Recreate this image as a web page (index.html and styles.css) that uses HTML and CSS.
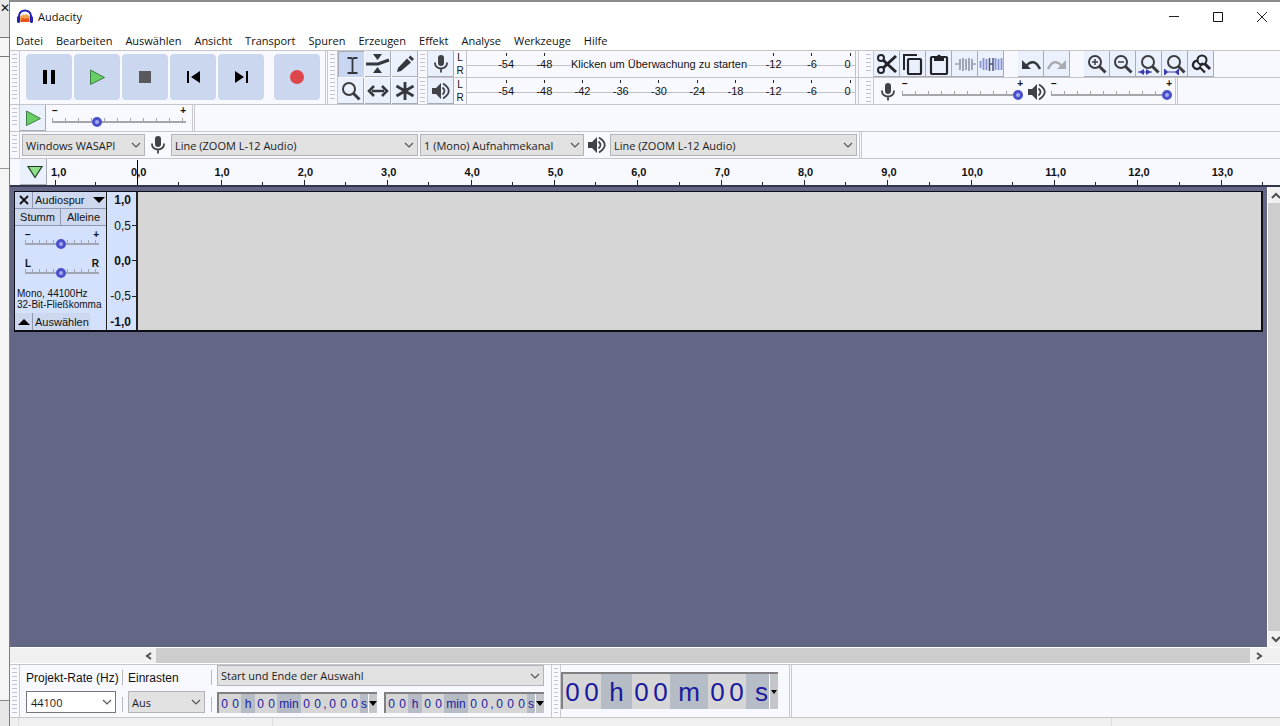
FILE: index.html
```html
<!DOCTYPE html>
<html lang="de">
<head>
<meta charset="UTF-8">
<meta name="viewport" content="width=device-width, initial-scale=1.0">
<title>Audacity</title>
<link rel="stylesheet" href="styles.css">
</head>
<body>

<!-- shared icons -->
<svg class="sprites" width="0" height="0">
    <symbol id="mic" viewBox="0 0 18 20">
        <rect x="6" y="1" width="6" height="11" rx="3" fill="#3f4246"/>
        <path d="M3 8.500v1a6 5 0 0 0 12 0v-1M9 14.500v4" fill="none" stroke="#3f4246" stroke-width="1.800"/>
    </symbol>
    <symbol id="speaker" viewBox="0 0 18 18">
        <path d="M0 6h4l5-5v16l-5-5H0z" fill="#3f4246"/>
        <path d="M10.500 5.500q4 3.500 0 7M11 1.500q11.500 7.500 0 15" fill="none" stroke="#3f4246" stroke-width="1.800"/>
    </symbol>
    <symbol id="chevron" viewBox="0 0 10 6">
        <path d="M1 1l4 4 4-4" fill="none" stroke="#555" stroke-width="1.200"/>
    </symbol>
    <symbol id="lens" viewBox="0 0 22 22">
        <circle cx="9" cy="9" r="6" fill="none" stroke="#3c3c40" stroke-width="2"/>
        <path d="M13.500 13.500l6 6" stroke="#3c3c40" stroke-width="3"/>
    </symbol>
</svg>

<div class="desktop">
    <div class="behind">
        <div class="behind-top">✕</div>
        <div class="behind-bar"></div>
        <div class="behind-gap"></div>
        <div class="behind-page"></div>
        <div class="behind-foot"></div>
    </div>

    <div class="window">
        <header class="titlebar">
            <svg width="16" height="16" viewBox="0 0 16 16">
                <path d="M3 13l-1-3 2-4 1 1 1-2 2 1 2-1 1 2 1-1 2 4-1 3z" fill="#f5a04a"/>
                <path d="M4 10l2-1 2 1 2-1 2 1v3H4z" fill="#e8501c"/>
                <path d="M2 9V7a6 5.500 0 0 1 12 0v2" fill="none" stroke="#2222b4" stroke-width="2"/>
                <rect x="0" y="7" width="3" height="7" rx="1.500" fill="#2222b4"/>
                <rect x="13" y="7" width="3" height="7" rx="1.500" fill="#2222b4"/>
            </svg>
            <span class="title">Audacity</span>
            <button class="win-btn" aria-label="Minimieren"><svg width="12" height="12"><path d="M1 5.500h10" stroke="#222"/></svg></button>
            <button class="win-btn" aria-label="Maximieren"><svg width="12" height="12"><path d="M1.500 1.500h9v9h-9z" fill="none" stroke="#111"/></svg></button>
            <button class="win-btn" aria-label="Schließen"><svg width="12" height="12"><path d="M1 1l10 10M11 1L1 11" stroke="#222"/></svg></button>
        </header>

        <nav class="menu">
            <button>Datei</button>
            <button>Bearbeiten</button>
            <button>Auswählen</button>
            <button>Ansicht</button>
            <button>Transport</button>
            <button>Spuren</button>
            <button>Erzeugen</button>
            <button>Effekt</button>
            <button>Analyse</button>
            <button>Werkzeuge</button>
            <button>Hilfe</button>
        </nav>

        <div class="dock">
            <div class="grip"></div>
            <div class="transport">
                <button aria-label="Pause"><svg width="20" height="20"><path d="M4 3h4v14H4zM12 3h4v14h-4z"/></svg></button>
                <button aria-label="Wiedergabe"><svg width="20" height="20"><path d="M3.500 3l14 7.500-14 7z" fill="#67cf63" stroke="#3f7f45"/></svg></button>
                <button aria-label="Stopp"><svg width="20" height="20"><path d="M4 4h12v12H4z" fill="#58595b"/></svg></button>
                <button aria-label="Zum Anfang"><svg width="20" height="20"><path d="M4 4h2v12H4zM17 4v12l-9-6z"/></svg></button>
                <button aria-label="Zum Ende"><svg width="20" height="20"><path d="M4 4v12l9-6zM15 4h2v12h-2z"/></svg></button>
                <button class="record" aria-label="Aufnahme"><svg width="20" height="20"><circle cx="10" cy="10" r="7" fill="#dd464b"/></svg></button>
            </div>
            <div class="divider"></div>

            <div class="grip"></div>
            <div class="tools">
                <button class="tool active" aria-label="Auswahl"><svg width="22" height="22"><path d="M6.500 4h3.500l1.500 1 1.500-1h3.500M6.500 19h3.500l1.500-1 1.500 1h3.500M11.500 5v13" fill="none" stroke="#34373c" stroke-width="1.800"/></svg></button>
                <button class="tool" aria-label="Hüllkurve"><svg width="24" height="22"><path d="M7 1h9l-4.500 6zM7 20h9l-4.500-6z" fill="#34373c"/><path d="M0 11h12l11-4" fill="none" stroke="#34373c" stroke-width="3"/></svg></button>
                <button class="tool" aria-label="Zeichnen"><svg width="22" height="22"><path d="M3 19l1-4L13 5.500l4 4L7 18zM14.500 4.500l2-2 3.500 3.500-2 2z" fill="#34373c"/></svg></button>
                <button class="tool" aria-label="Zoom"><svg width="22" height="22"><use href="#lens"/></svg></button>
                <button class="tool" aria-label="Verschieben"><svg width="22" height="22"><path d="M5 11h12M7 6l-5 5 5 5M15 6l5 5-5 5" fill="none" stroke="#34373c" stroke-width="2.500"/></svg></button>
                <button class="tool" aria-label="Multi"><svg width="22" height="22"><path d="M11 2v18M2.500 6l17 10M2.500 16l17-10" stroke="#34373c" stroke-width="2.800"/></svg></button>
            </div>

            <div class="meters">
                <div class="meter-row">
                    <div class="grip"></div>
                    <button class="tool" aria-label="Aufnahmepegel"><svg width="20" height="20"><use href="#mic"/></svg></button>
                    <div class="lr"><span>L</span><span>R</span></div>
                    <div class="meter">
                        <span>-54</span><span>-48</span><button class="monitor">Klicken um Überwachung zu starten</button><span>-12</span><span>-6</span><span class="zero">0</span>
                    </div>
                </div>
                <div class="meter-row">
                    <div class="grip"></div>
                    <button class="tool" aria-label="Wiedergabepegel"><svg width="18" height="18"><use href="#speaker"/></svg></button>
                    <div class="lr"><span>L</span><span>R</span></div>
                    <div class="meter">
                        <span>-54</span><span>-48</span><span>-42</span><span>-36</span><span>-30</span><span>-24</span><span>-18</span><span>-12</span><span>-6</span><span class="zero">0</span>
                    </div>
                </div>
            </div>

            <div class="edit-col">
                <div class="edit-row">
                    <div class="grip"></div>
                    <button class="tool" aria-label="Ausschneiden"><svg width="22" height="22"><circle cx="5" cy="5" r="3" fill="none" stroke="#222428" stroke-width="2"/><circle cx="5" cy="17" r="3" fill="none" stroke="#222428" stroke-width="2"/><path d="M7 7l13 12M7 15L20 3" stroke="#222428" stroke-width="3"/></svg></button>
                    <button class="tool" aria-label="Kopieren"><svg width="22" height="22"><path d="M2 17V2h13" fill="none" stroke="#222428" stroke-width="2"/><rect x="6" y="6" width="13" height="15" rx="1" fill="none" stroke="#222428" stroke-width="2.200"/></svg></button>
                    <button class="tool" aria-label="Einfügen"><svg width="22" height="22"><rect x="3" y="4" width="16" height="17" rx="1" fill="none" stroke="#222428" stroke-width="2.200"/><path d="M6 4h3a2 2.500 0 0 1 4 0h3v4H6z" fill="#222428"/></svg></button>
                    <button class="tool" aria-label="Trimmen"><svg width="22" height="22"><path d="M1 11h4M18 11h4" stroke="#a0a3b0" stroke-width="1.500"/><path d="M6 6v11M9 5v13M12 6v11M15 5v13M18 6v11" stroke="#9a9dae" stroke-width="1.800"/></svg></button>
                    <button class="tool" aria-label="Stille"><svg width="24" height="22"><path d="M1.500 8v7M4.500 5v12M7.500 6v11M16.500 5v12M19.500 6v11M22.500 5v12" stroke="#8790d0" stroke-width="1.800"/><path d="M10.500 5v13M14 5v13M10 11h4" stroke="#4d5380" stroke-width="1.500"/></svg></button>
                    <span class="space"></span>
                    <button class="tool" aria-label="Rückgängig"><svg width="22" height="22"><path d="M2 7v9h9z" fill="#34373c"/><path d="M6 13q8-9 14 3" fill="none" stroke="#34373c" stroke-width="2.500"/></svg></button>
                    <button class="tool" aria-label="Wiederholen"><svg width="22" height="22"><path d="M20 7v9h-9z" fill="#a9abb0"/><path d="M16 13q-8-9-14 3" fill="none" stroke="#a9abb0" stroke-width="2.500"/></svg></button>
                    <span class="space"></span>
                    <button class="tool" aria-label="Vergrößern"><svg width="22" height="22"><use href="#lens"/><path d="M6 9h6M9 6v6" stroke="#3c3c40" stroke-width="1.500"/></svg></button>
                    <button class="tool" aria-label="Verkleinern"><svg width="22" height="22"><use href="#lens"/><path d="M6 9h6" stroke="#3c3c40" stroke-width="1.500"/></svg></button>
                    <button class="tool" aria-label="Auswahl einpassen"><svg width="22" height="22"><use href="#lens" x="1" y="0"/><path d="M0 19h14" stroke="#3a3cae"/><path d="M1 19l5-3v6zM13 19l-5-3v6z" fill="#3a3cae"/></svg></button>
                    <button class="tool" aria-label="Projekt einpassen"><svg width="22" height="22"><use href="#lens" x="1" y="0"/><path d="M0 19h15M.5 16v6M14.500 16v6" stroke="#3a3cae"/><path d="M4 19l-3-3v6zM11 19l3-3v6z" fill="#3a3cae"/></svg></button>
                    <button class="tool" aria-label="Zoom umschalten"><svg width="22" height="22" fill="none" stroke="#222428"><circle cx="12" cy="7" r="4.500" stroke-width="2"/><path d="M15 11l5 5" stroke-width="3"/><path d="M8 8a4 4 0 1 0 2 6.500l5 5M10 13l3-3" stroke-width="2.200"/></svg></button>
                </div>
                <div class="edit-row">
                    <div class="grip"></div>
                    <svg class="mixer-icon" width="20" height="20"><use href="#mic"/></svg>
                    <label class="slider mixer">
                        <span class="signs"><span>−</span><span>+</span></span>
                        <input type="range" min="0" max="100" value="100" aria-label="Aufnahmelautstärke">
                    </label>
                    <svg class="mixer-icon" width="20" height="18"><use href="#speaker"/></svg>
                    <label class="slider mixer">
                        <span class="signs"><span>−</span><span>+</span></span>
                        <input type="range" min="0" max="100" value="100" aria-label="Wiedergabelautstärke">
                    </label>
                    <div class="divider"></div>
                </div>
            </div>
        </div>

        <div class="bar">
            <div class="grip"></div>
            <button class="tool" aria-label="Wiedergabe mit Geschwindigkeit"><svg width="20" height="20"><path d="M3.500 3l14 7.500-14 7z" fill="#67cf63" stroke="#3f7f45"/></svg></button>
            <label class="slider speed">
                <span class="signs"><span>−</span><span>+</span></span>
                <input type="range" min="0" max="100" value="32" aria-label="Wiedergabegeschwindigkeit">
            </label>
            <div class="divider"></div>
        </div>

        <div class="bar devices">
            <div class="grip"></div>
            <div class="combo host"><select aria-label="Audio-Host"><option>Windows WASAPI</option></select><svg width="10" height="6"><use href="#chevron"/></svg></div>
            <svg class="device-icon" width="20" height="20"><use href="#mic"/></svg>
            <div class="combo device"><select aria-label="Aufnahmegerät"><option>Line (ZOOM L-12 Audio)</option></select><svg width="10" height="6"><use href="#chevron"/></svg></div>
            <div class="combo channel"><select aria-label="Aufnahmekanäle"><option>1 (Mono) Aufnahmekanal</option></select><svg width="10" height="6"><use href="#chevron"/></svg></div>
            <svg class="device-icon" width="20" height="18"><use href="#speaker"/></svg>
            <div class="combo device"><select aria-label="Wiedergabegerät"><option>Line (ZOOM L-12 Audio)</option></select><svg width="10" height="6"><use href="#chevron"/></svg></div>
            <div class="divider"></div>
        </div>

        <div class="timeline">
            <button class="tool pin" aria-label="Abspielposition"><svg width="18" height="16"><path d="M2 2.500h14l-7 11z" fill="#8fe08a" stroke="#1f3a22" stroke-width="1.200"/></svg></button>
            <span class="lead">1,0</span>
            <div class="seconds">
                <span class="cursor">0,0</span><span>1,0</span><span>2,0</span><span>3,0</span><span>4,0</span><span>5,0</span><span>6,0</span><span>7,0</span><span>8,0</span><span>9,0</span><span>10,0</span><span>11,0</span><span>12,0</span><span>13,0</span>
            </div>
        </div>

        <main class="project">
            <div class="tracks">
                <section class="track">
                    <div class="panel">
                        <div class="panel-row">
                            <button class="close" aria-label="Spur schließen"><svg width="10" height="10"><path d="M1 1l8 8M9 1L1 9" stroke="#111" stroke-width="1.800"/></svg></button>
                            <button class="name">Audiospur<svg width="12" height="6"><path d="M0 0h12L6 6z"/></svg></button>
                        </div>
                        <div class="panel-row">
                            <button class="half">Stumm</button>
                            <button class="half">Alleine</button>
                        </div>
                        <label class="slider small">
                            <span class="signs"><span>−</span><span>+</span></span>
                            <input type="range" min="0" max="100" value="48" aria-label="Lautstärke">
                        </label>
                        <label class="slider small">
                            <span class="signs"><span>L</span><span>R</span></span>
                            <input type="range" min="0" max="100" value="48" aria-label="Balance">
                        </label>
                        <p class="info">Mono, 44100Hz<br>32-Bit-Fließkomma</p>
                        <div class="panel-row last">
                            <button class="close" aria-label="Einklappen"><svg width="12" height="6"><path d="M0 6h12L6 0z"/></svg></button>
                            <button class="select">Auswählen</button>
                        </div>
                    </div>
                    <div class="scale">
                        <b>1,0</b><span class="tick">0,5</span><b class="tick">0,0</b><span class="tick">-0,5</span><b>-1,0</b>
                    </div>
                    <div class="wave"></div>
                </section>
            </div>
            <div class="vscroll">
                <button aria-label="Nach oben"><svg width="10" height="7"><path d="M1 6l4-4 4 4" fill="none" stroke="#505050" stroke-width="2"/></svg></button>
                <div class="thumb"></div>
                <button aria-label="Nach unten"><svg width="10" height="7"><path d="M1 1l4 4 4-4" fill="none" stroke="#505050" stroke-width="2"/></svg></button>
            </div>
        </main>

        <div class="hscroll">
            <button aria-label="Nach links"><svg width="7" height="8"><path d="M6 1L2 4l4 3" fill="none" stroke="#505050" stroke-width="2"/></svg></button>
            <div class="thumb"></div>
            <button aria-label="Nach rechts"><svg width="7" height="8"><path d="M1 1l4 3-4 3" fill="none" stroke="#505050" stroke-width="2"/></svg></button>
        </div>

        <footer class="bottom">
            <div class="grip"></div>
            <div class="field rate">
                <label for="rate">Projekt-Rate (Hz)</label>
                <div class="combo white"><select id="rate"><option>44100</option></select><svg width="10" height="6"><use href="#chevron"/></svg></div>
            </div>
            <div class="rules"><i></i><i></i></div>
            <div class="field snap">
                <label for="snap">Einrasten</label>
                <div class="combo"><select id="snap"><option>Aus</option></select><svg width="10" height="6"><use href="#chevron"/></svg></div>
            </div>
            <div class="rules"><i></i><i></i></div>
            <div class="selection">
                <div class="combo"><select aria-label="Auswahlmodus"><option>Start und Ende der Auswahl</option></select><svg width="10" height="6"><use href="#chevron"/></svg></div>
                <div class="times">
                    <div class="time">
                        <span>0</span><span>0</span><em>h</em><span>0</span><span>0</span><em class="min">min</em><span>0</span><span>0</span><span class="comma">,</span><span>0</span><span>0</span><span>0</span><em class="sec">s</em>
                        <button aria-label="Format"><svg width="8" height="5"><path d="M0 0h8L4 5z"/></svg></button>
                    </div>
                    <div class="time">
                        <span>0</span><span>0</span><em>h</em><span>0</span><span>0</span><em class="min">min</em><span>0</span><span>0</span><span class="comma">,</span><span>0</span><span>0</span><span>0</span><em class="sec">s</em>
                        <button aria-label="Format"><svg width="8" height="5"><path d="M0 0h8L4 5z"/></svg></button>
                    </div>
                </div>
            </div>
            <div class="grip wide"></div>
            <div class="time big">
                <span>0</span><span>0</span><em>h</em><span>0</span><span>0</span><em class="min">m</em><span>0</span><span>0</span><em class="sec">s</em>
                <button aria-label="Format"><svg width="6" height="4"><path d="M0 0h6L3 4z"/></svg></button>
            </div>
            <div class="divider"></div>
        </footer>
        <div class="status"><i></i><i></i><i></i></div>
    </div>
</div>

</body>
</html>
```
FILE: styles.css
```css
* {
    box-sizing: border-box;
}

body {
    margin: 0;
    font-family: "Open Sans", "Noto Sans", sans-serif;
    font-size: 11px;
    color: #111;
    background: #f0f0f0;
}

button {
    margin: 0;
    padding: 0;
    border: 0;
    background: none;
    font: inherit;
    color: inherit;
}

svg {
    display: block;
    flex: none;
}

.sprites {
    position: absolute;
}

.desktop {
    display: flex;
    height: 100vh;
    overflow: hidden;
}

/* sliver of the window behind */
.behind {
    width: 9px;
    flex: none;
    display: flex;
    flex-direction: column;
    background: #f5f5f5;
    overflow: hidden;
}

.behind-top {
    height: 38px;
    border-bottom: 1px solid #777;
    background: #e9e9e9;
    font: 12px/16px "DejaVu Sans", sans-serif;
}

.behind-bar {
    height: 19px;
    border-bottom: 1px solid #777;
}

.behind-gap {
    height: 112px;
    border-bottom: 1px solid #999;
}

.behind-page {
    flex: 1;
    border-bottom: 1px solid #888;
}

.behind-foot {
    height: 25px;
    background: #e6e6e6;
}

.window {
    flex: 1;
    min-width: 0;
    display: flex;
    flex-direction: column;
    border-left: 1px solid #7c7c80;
    border-top: 2px solid #8c8c8c;
    background: #f8f9fe;
}

.titlebar {
    height: 29px;
    flex: none;
    display: flex;
    align-items: center;
    padding-left: 7px;
    background: #fff;
}

.title {
    flex: 1;
    margin-left: 5px;
}

.win-btn {
    width: 44px;
    height: 28px;
    display: grid;
    place-items: center;
}

.win-btn:last-child {
    margin-right: -4px;
}

.menu {
    height: 19px;
    flex: none;
    display: flex;
    gap: 13px;
    padding-left: 6px;
    background: #fff;
    line-height: 18px;
}

/* toolbars */
.dock {
    display: flex;
    height: 55px;
    flex: none;
    border-top: 1px solid #c6c6ca;
    border-bottom: 1px solid #c6c6ca;
}

.grip {
    width: 10px;
    flex: none;
    align-self: stretch;
    padding: 3px 2px;
    border-right: 1px solid #c8c8ce;
    background: repeating-linear-gradient(#c4c4ca 0 1px, transparent 1px 4px) content-box;
}

.divider {
    width: 3px;
    flex: none;
    align-self: stretch;
    border: solid #c8c8ce;
    border-width: 0 1px;
}

.transport {
    display: flex;
    gap: 2px;
    padding: 3px 5px 0 6px;
}

.transport button {
    width: 46px;
    height: 46px;
    display: grid;
    place-items: center;
    border-radius: 4px;
    background: #cbd7ef;
}

.transport .record {
    margin-left: 8px;
}

.tool {
    width: 26px;
    height: 26px;
    flex: none;
    display: grid;
    place-items: center;
    border: solid #a9abb5;
    border-width: 0 1px 1px 0;
    background: #eaf1fd;
}

.tool.active {
    background: #c8d6f1;
    border-width: 1px 0 0 1px;
}

.tools {
    display: grid;
    grid-template-columns: repeat(3, 26px);
    gap: 1px;
    align-content: start;
}

.meters {
    width: 440px;
}

.meter-row,
.edit-row {
    display: flex;
    height: 27px;
}

.meter-row:first-child,
.edit-row:first-child {
    border-bottom: 1px solid #c6c6ca;
}

.lr {
    width: 12px;
    display: flex;
    flex-direction: column;
    align-items: center;
    font: 10px/13px "Liberation Sans", sans-serif;
}

.meter {
    flex: 1;
    display: grid;
    grid-template-columns: repeat(9, minmax(0, 1fr)) 24px;
    padding-left: 20px;
    margin-right: 2px;
    border: solid #c0c0c6;
    border-width: 0 1px;
    background: linear-gradient(#c2c2c8, #c2c2c8) 0 14px / 100% 1px no-repeat;
    font: 11px/26px "Liberation Sans", sans-serif;
}

.meter span {
    text-align: center;
    background: linear-gradient(#222, #222) center 2px / 1px 3px no-repeat;
}

.meter .zero {
    padding-left: 9px;
    background-position: 19px 2px;
}

.meter .monitor {
    grid-column: span 5;
    place-self: center;
    background: #f8f9fe;
    line-height: 22px;
    white-space: nowrap;
}

.edit-col {
    flex: 1;
    border-left: 1px solid #c8c8ce;
}

.edit-row .grip {
    margin-left: 5px;
}

.space {
    width: 14px;
}

.mixer-icon {
    align-self: center;
    margin: 0 4px;
}

/* sliders */
.slider {
    display: flex;
    flex-direction: column;
}

.signs {
    display: flex;
    justify-content: space-between;
    height: 10px;
    font: bold 10px/12px "Liberation Sans", sans-serif;
}

.slider input {
    -webkit-appearance: none;
    appearance: none;
    width: 100%;
    height: 12px;
    margin: 0;
    background:
        linear-gradient(#a6a6aa, #a6a6aa) 0 6px / 100% 2px no-repeat,
        repeating-linear-gradient(90deg, #a6a6aa 0 1px, transparent 1px 13px) 0 3px / 100% 4px no-repeat;
}

.slider input::-webkit-slider-thumb {
    -webkit-appearance: none;
    width: 10px;
    height: 10px;
    margin-top: 2px;
    border-radius: 50%;
    border: 3px solid #4a50cc;
    background: #a4acf0;
}

.mixer {
    width: 121px;
}

.mixer + .divider {
    margin-left: 3px;
}

.bar {
    display: flex;
    height: 27px;
    flex: none;
    border-bottom: 1px solid #c6c6ca;
}

.speed {
    width: 134px;
    margin: 0 6px;
}

/* drop-downs */
.combo {
    display: grid;
    align-items: center;
}

.combo select {
    grid-area: 1 / 1;
    appearance: none;
    width: 100%;
    height: 22px;
    margin: 0;
    padding: 0 3px;
    border: 1px solid #b4b4b8;
    border-radius: 0;
    background: #e1e1e1;
    font: inherit;
    color: #1c1c1c;
}

.combo svg {
    grid-area: 1 / 1;
    justify-self: end;
    margin-right: 4px;
    pointer-events: none;
}

.combo.white select {
    padding-left: 4px;
    border-color: #777;
    background: #fff;
}

.devices {
    align-items: center;
}

.devices .grip {
    margin-right: 2px;
}

.host {
    width: 123px;
}

.device {
    width: 247px;
}

.channel {
    width: 164px;
    margin-left: 2px;
}

.device-icon {
    margin: 0 3px;
}

.devices .divider {
    margin-left: 2px;
}

/* time ruler */
.timeline {
    display: flex;
    height: 28px;
    flex: none;
    padding: 0 17px 0 10px;
    border-bottom: 2px solid #33364a;
    font: bold 11px/26px "Liberation Sans", sans-serif;
}

.pin {
    width: 27px;
    padding-left: 4px;
}

.lead {
    width: 49px;
    padding-left: 4px;
    background:
        linear-gradient(#222, #222) 8px 100% / 1px 5px no-repeat,
        linear-gradient(#222, #222) 100% 100% / 1px 3px no-repeat;
}

.seconds {
    flex: 1;
    display: flex;
}

.seconds span {
    flex: 1;
    padding-left: 2px;
    text-align: center;
    background:
        linear-gradient(#222, #222) 50% 100% / 1px 5px no-repeat,
        linear-gradient(#222, #222) 100% 100% / 1px 3px no-repeat;
}

.seconds .cursor {
    background:
        linear-gradient(#000, #000) 50% 100% / 1px 25px no-repeat,
        linear-gradient(#222, #222) 100% 100% / 1px 3px no-repeat;
}

/* tracks */
.project {
    flex: 1;
    min-height: 0;
    display: flex;
}

.tracks {
    flex: 1;
    padding: 4px;
    background: #636684;
}

.track {
    display: flex;
    height: 141px;
    border: solid #0c0c14;
    border-width: 1px 2px 2px 1px;
    background: #d4e1fc;
    font: 11px "Liberation Sans", sans-serif;
}

.panel {
    width: 92px;
    display: flex;
    flex-direction: column;
    border-right: 1px solid #222;
}

.panel-row {
    display: flex;
    height: 17px;
    flex: none;
    border-bottom: 1px solid #8f98b0;
    background: #cdd8ee;
}

.panel-row button {
    border-right: 1px solid #8f98b0;
}

.panel-row button:last-child {
    border-right: 0;
}

.close {
    width: 18px;
    display: grid;
    place-items: center;
}

.panel .name {
    flex: 1;
    display: flex;
    align-items: center;
    justify-content: space-between;
    padding: 0 1px 0 2px;
}

.half {
    flex: 1;
}

.small {
    width: 74px;
    height: 21px;
    margin: 3px 0 0 10px;
}

.small .signs {
    height: 8px;
}

.small + .small {
    margin-top: 8px;
}

.small input {
    background:
        linear-gradient(#a0a6b4, #a0a6b4) 0 6px / 100% 2px no-repeat,
        repeating-linear-gradient(90deg, #a0a6b4 0 1px, transparent 1px 7px) 0 3px / 100% 4px no-repeat;
}

.info {
    margin: 9px 0 0 2px;
    font-size: 10px;
    line-height: 11px;
    white-space: nowrap;
}

.panel-row.last {
    width: 75px;
    margin-top: auto;
    border-bottom: 0;
}

.panel .select {
    border-right: 1px solid #8f98b0;
    padding: 0 0 0 2px;
    white-space: nowrap;
}

.scale {
    width: 31px;
    display: grid;
    grid-template-rows: 16px 1fr 1fr 1fr 16px;
    align-items: center;
    padding-right: 5px;
    border-right: 2px solid #222;
    text-align: right;
    font-size: 12px;
}

.scale .tick {
    margin-right: -5px;
    padding-right: 5px;
    background: linear-gradient(#222, #222) 100% 50% / 4px 1px no-repeat;
}

.wave {
    flex: 1;
    background: #d6d6d6;
}

.vscroll {
    width: 13px;
    flex: none;
    display: flex;
    flex-direction: column;
    border-left: 1px solid #fff;
    background: #f0f0f0;
}

.vscroll button {
    height: 16px;
    padding-left: 3px;
}

.thumb {
    flex: 1;
    background: #cdcdcd;
}

.hscroll {
    display: flex;
    height: 17px;
    flex: none;
    padding-left: 131px;
    border: solid #fff;
    border-width: 1px 0;
    background: #f0f0f0;
}

.hscroll button {
    width: 15px;
    display: grid;
    place-items: center;
}

.hscroll button:last-child {
    width: 18px;
    margin-right: 12px;
}

/* selection and time toolbars */
.bottom {
    display: flex;
    height: 54px;
    flex: none;
    border-top: 1px solid #c6c6ca;
    border-bottom: 1px solid #c6c6ca;
}

.field {
    padding-left: 6px;
}

.field label {
    display: block;
    height: 26px;
    font: 12px/26px "Liberation Sans", sans-serif;
    white-space: nowrap;
}

.rate {
    width: 96px;
}

.snap {
    width: 82px;
    padding-left: 5px;
}

.rules {
    width: 7px;
    display: flex;
    flex-direction: column;
    gap: 12px;
    padding-top: 5px;
}

.rules i {
    height: 15px;
    border-right: 1px solid #b8b8bc;
}

.snap + .rules {
    margin-right: 5px;
}

.selection {
    width: 327px;
}

.selection select {
    height: 21px;
}

.times {
    display: flex;
    justify-content: space-between;
    margin-top: 6px;
}

.time {
    display: flex;
    height: 21px;
    border: solid #808084;
    border-width: 2px 0 0 2px;
    background: #d6d6d6;
    font: 12px/20px "Liberation Sans", sans-serif;
    color: #1a1aa0;
}

.time span {
    width: 11px;
    text-align: center;
}

.time em {
    width: 14px;
    font-style: normal;
    text-align: center;
    background: #b6bcc6;
}

.time .min {
    width: 24px;
}

.time .comma {
    width: 4px;
}

.time .sec {
    width: 8px;
}

.time button {
    width: 9px;
    display: grid;
    place-items: center;
    border-left: 1px solid #fff;
    background: #c4c6ca;
}

.grip.wide {
    margin-left: 7px;
    border-left: 1px solid #c8c8ce;
}

.big {
    height: 37px;
    margin: 7px 11px 0 0;
    font-size: 26px;
    line-height: 36px;
}

.big span {
    width: 19px;
}

.big em {
    width: 31px;
}

.big .min {
    width: 38px;
}

.big .sec {
    width: 23px;
    padding-right: 1px;
    text-align: right;
}

.status {
    height: 8px;
    flex: none;
    display: flex;
    background: #f0f0f0;
}

.status i {
    width: 9px;
    border-right: 1px solid #ddd;
}

.status i:nth-child(2) {
    width: 254px;
}

.status i:nth-child(3) {
    flex: 1;
    margin-right: 168px;
}
```
